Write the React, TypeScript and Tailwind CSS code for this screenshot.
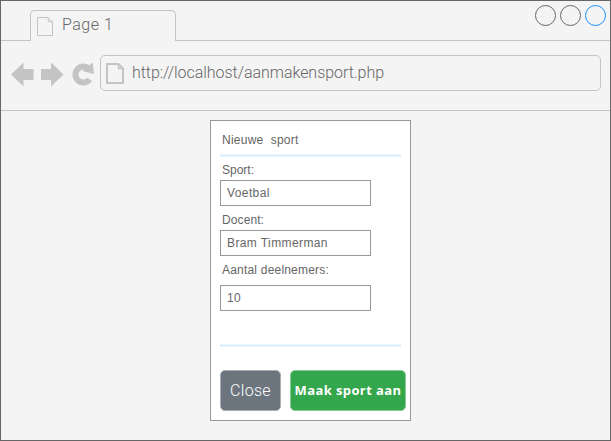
const CIRCLES = ["#666666", "#666666", "#1890ff"];

function PageIcon({ bold = false }: { bold?: boolean }) {
  return bold ? (
    <svg width="18" height="21" viewBox="0 0 18 21" fill="none" stroke="#c4c4c4">
      <path d="M1 1H12.5L17 5.5V20H1Z" strokeWidth="2" />
      <path d="M12.5 1V5.5H17" strokeWidth="1.4" />
    </svg>
  ) : (
    <svg width="16" height="19" viewBox="0 0 16 19" fill="none" stroke="#c4c4c4">
      <path d="M.5 .5H11L15.5 5V18.5H.5Z" />
      <path d="M11 .5L11.5 4.5L15.5 5" />
    </svg>
  );
}

function Field({ value }: { value: string }) {
  return (
    <div className="flex h-[26px] w-[151px] items-center border border-[#999999] pl-[6px] text-xs tracking-[0.4px]">
      {value}
    </div>
  );
}

export default function App() {
  return (
    <div className="flex h-[441px] w-[611px] flex-col border border-[#666666] bg-[#f4f4f4] font-['Liberation_Sans',Arial,sans-serif] text-[#666666]">
      <div className="flex h-10 shrink-0">
        <div className="w-[29px] border-b border-[#c4c4c4]" />
        <div className="mt-[9px] flex h-[31px] w-[146px] rounded-t-[5px] border border-b-0 border-[#c4c4c4] pl-[6px]">
          <div className="pt-[6px]">
            <PageIcon />
          </div>
          <span className="ml-[9px] pt-[4px] font-[Roboto] text-base leading-5 font-light tracking-[0.5px]">Page 1</span>
        </div>
        <div className="flex flex-1 justify-end gap-1 border-b border-[#c4c4c4] pt-1 pr-1">
          {CIRCLES.map((color, i) => (
            <svg key={i} width="21" height="21" viewBox="0 0 21 21" fill="none">
              <circle cx="10.5" cy="10.5" r="10" stroke={color} />
            </svg>
          ))}
        </div>
      </div>
      <div className="flex h-[70px] shrink-0 border-b border-[#c4c4c4] pt-[14px]">
        <svg className="mt-[7px] ml-[10px] shrink-0" width="84" height="25" viewBox="0 0 84 25" fill="#c4c4c4">
          <path d="M0 12.5L12.5 .5V7H22.5V18H12.5V24.5Z" />
          <path d="M52.5 12.5L40 .5V7H30V18H40V24.5Z" />
          <path
            d="M78 6.8A8 8 0 1 0 78.7 17.5"
            fill="none"
            stroke="#c4c4c4"
            strokeWidth="6"
          />
          <path d="M81.7 .5L83 12L71.3 9Z" />
        </svg>
        <div className="ml-[5px] flex h-9 w-[501px] rounded-[5px] border border-[#c4c4c4] pl-[5px]">
          <div className="pt-[7px]">
            <PageIcon bold />
          </div>
          <span className="ml-[8px] pt-[7px] font-[Roboto] text-base leading-5 font-light tracking-[-0.04px]">
            http://localhost/aanmakensport.php
          </span>
        </div>
      </div>
      <div className="mt-[9px] ml-[209px] flex h-[301px] w-[201px] flex-col border border-[#999999] bg-white pl-[9px] text-xs">
        <h1 className="mt-[11px] ml-[2px] h-4 leading-4 tracking-[0.25px] whitespace-pre">Nieuwe  sport</h1>
        <div className="mt-[6px] h-[3px] w-[181px] shrink-0 border-y border-[#edf5ff] bg-[#d8ebff]" />
        <label className="mt-[5px] ml-[2px] h-4 leading-4">Sport:</label>
        <div className="mt-[2px]">
          <Field value="Voetbal" />
        </div>
        <label className="mt-[6px] ml-[2px] h-4 leading-4 tracking-[0.1px]">Docent:</label>
        <div className="mt-[2px]">
          <Field value="Bram Timmerman" />
        </div>
        <label className="mt-[6px] ml-[2px] h-4 leading-4 tracking-[0.2px]">Aantal deelnemers:</label>
        <div className="mt-[7px]">
          <Field value="10" />
        </div>
        <div className="mt-[33px] h-[3px] w-[181px] shrink-0 border-y border-[#edf5ff] bg-[#d8ebff]" />
        <div className="mt-[23px] flex gap-[9px]">
          <button className="h-[41px] w-[61px] rounded-[5px] border border-[#a8aeb3] bg-[#6c757d] font-[Roboto] text-base font-light tracking-[0.3px] text-white">
            Close
          </button>
          <button className="h-[41px] w-[116px] shrink-0 rounded-[5px] border border-[#86ca94] bg-[#34a64c] font-['Open_Sans'] text-[13px] font-bold tracking-[0.4px] whitespace-nowrap text-white">
            Maak sport aan
          </button>
        </div>
      </div>
    </div>
  );
}
